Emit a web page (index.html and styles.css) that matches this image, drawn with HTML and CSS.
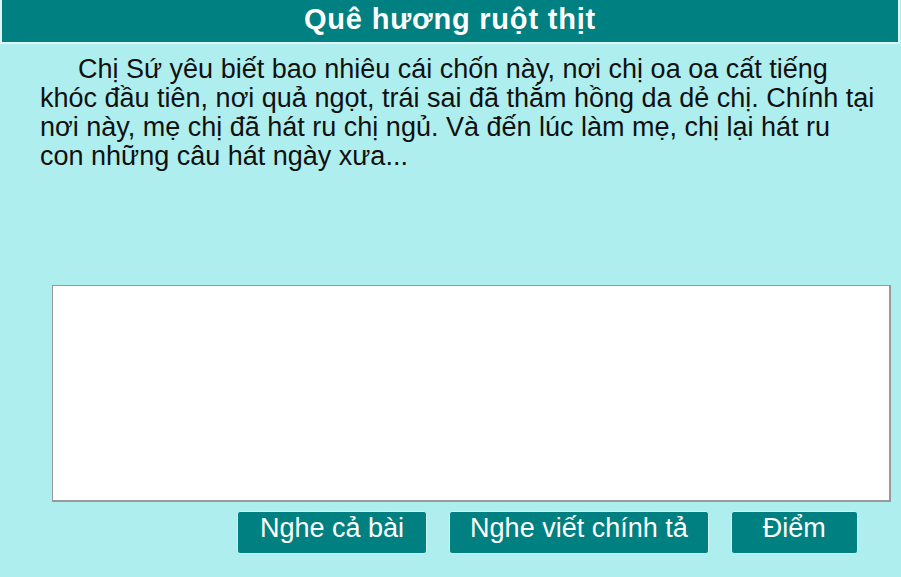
FILE: index.html
```html
<!DOCTYPE html>
<html lang="vi">
<head>
    <meta charset="UTF-8">
    <meta name="viewport" content="width=device-width, initial-scale=1.0">
    <title>Quê hương ruột thịt</title>
    <link rel="stylesheet" href="styles.css">
</head>
<body>

    <h1 class="title">Quê hương ruột thịt</h1>

    <div class="passage">
        <p>Chị Sứ yêu biết bao nhiêu cái chốn này, nơi chị oa oa cất tiếng khóc đầu tiên, nơi quả ngọt, trái sai đã thắm hồng da dẻ chị. Chính tại nơi này, mẹ chị đã hát ru chị ngủ. Và đến lúc làm mẹ, chị lại hát ru con những câu hát ngày xưa...</p>
    </div>

    <textarea class="answer" id="answer"></textarea>

    <div class="actions">
        <button type="button" class="btn">Nghe cả bài</button>
        <button type="button" class="btn btn-dictate">Nghe viết chính tả</button>
        <button type="button" class="btn btn-score">Điểm</button>
    </div>

</body>
</html>
```

FILE: styles.css
```css
body {
    margin: 0;
    background: #afeeee;
    font-family: "Liberation Sans", Arial, sans-serif;
}
.title {
    margin: 0 1px 0 0;
    height: 42px;
    line-height: 38px;
    background: #008080;
    color: #fff;
    font-size: 29px;
    font-weight: bold;
    letter-spacing: 0.8px;
    text-align: center;
    border: 2px solid #dff5f5;
    border-top: none;
}
.passage {
    height: 230px;
    padding: 11px 25px 0 40px;
}
.passage p {
    margin: 0;
    font-size: 27px;
    line-height: 29px;
    text-indent: 38px;
    color: #111;
}
.answer {
    display: block;
    box-sizing: border-box;
    width: 839px;
    height: 217px;
    margin: 0 0 9px 52px;
    border: 1px solid #999;
    border-width: 1px 2px 2px 1px;
    background: #fff;
    resize: none;
}
.actions {
    display: flex;
    gap: 22px;
    padding-left: 237px;
}
.btn {
    height: 43px;
    padding: 0 22px 9px;
    background: #008080;
    color: #fff;
    font-family: "Liberation Sans", Arial, sans-serif;
    font-size: 27px;
    border: 1px solid #d4f2f2;
    border-radius: 3px;
    cursor: pointer;
}
.btn-dictate {
    padding: 0 20px 9px;
}
.btn-score {
    padding: 0 31px 9px;
}
```
